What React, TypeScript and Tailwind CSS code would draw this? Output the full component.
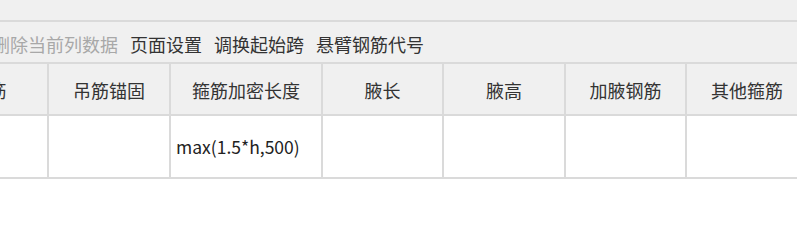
import React from "react";

const headers: { label: string; w: string }[] = [
  { label: "吊筋", w: "w-[119px]" },
  { label: "吊筋锚固", w: "w-[122px]" },
  { label: "箍筋加密长度", w: "w-[152px]" },
  { label: "腋长", w: "w-[121px]" },
  { label: "腋高", w: "w-[122px]" },
  { label: "加腋钢筋", w: "w-[121px]" },
  { label: "其他箍筋", w: "w-[122px]" },
];

const values = ["", "", "max(1.5*h,500)", "", "", "", ""];

export default function App() {
  return (
    <div
      className="w-[797px] h-[232px] overflow-hidden bg-white text-[18px] text-[#333333]"
      style={{ fontFamily: '"Noto Sans CJK SC", "Noto Sans", sans-serif' }}
    >
      <div className="h-[20px] bg-[#f0f0f0]" />
      <div className="h-[44px] bg-[#f0f0f0] border-t-2 border-b-2 border-[#dadada] flex items-center pt-[3px] ml-[-8px] gap-[12px] whitespace-nowrap leading-none">
        <span className="text-[#a8a8a8]">删除当前列数据</span>
        <span>页面设置</span>
        <span>调换起始跨</span>
        <span>悬臂钢筋代号</span>
      </div>
      <div className="flex ml-[-70px] h-[52px] bg-[#f0f0f0] border-b-2 border-[#dadada] whitespace-nowrap">
        {headers.map((h, i) => (
          <div
            key={i}
            className={`${h.w} shrink-0 border-r-2 border-[#dadada] flex items-center justify-center pt-[2px] leading-none`}
          >
            {h.label}
          </div>
        ))}
      </div>
      <div className="flex ml-[-70px] h-[63px] bg-white border-b-2 border-[#dadada] whitespace-nowrap">
        {headers.map((h, i) => (
          <div
            key={i}
            className={`${h.w} shrink-0 border-r-2 border-[#dadada] flex items-center pl-[5px] pt-[1px] leading-none text-[#222222] text-[17.5px]`}
          >
            {values[i]}
          </div>
        ))}
      </div>
    </div>
  );
}
